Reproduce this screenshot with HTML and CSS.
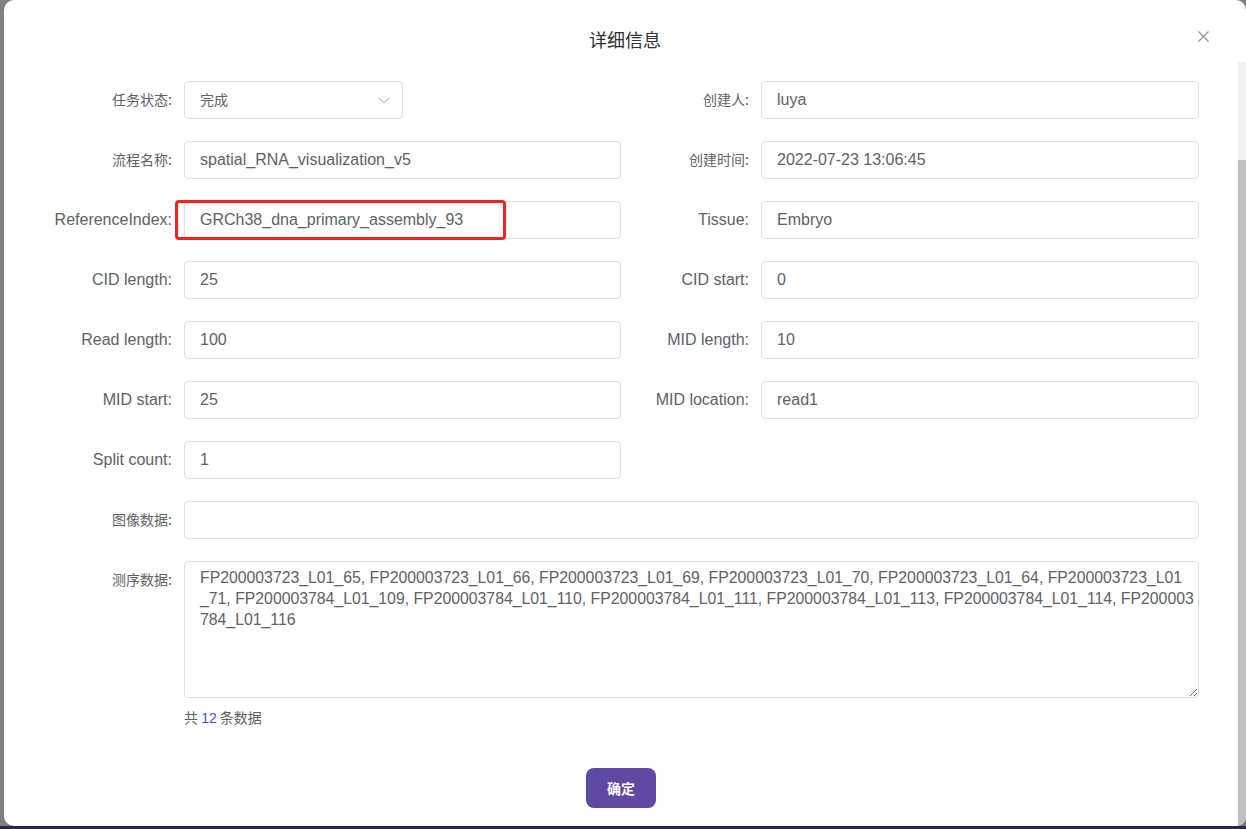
FILE: index.html
```html
<!DOCTYPE html>
<html lang="zh-CN">
<head>
<meta charset="utf-8">
<title>详细信息</title>
<link rel="stylesheet" href="styles.css">
</head>
<body>
<div class="stage">
  <div class="modal">
    <div class="modal-header">
      <span class="modal-title">详细信息</span>
      <button class="close" type="button" aria-label="关闭">
        <svg width="11" height="11" viewBox="0 0 11 11"><path d="M0.5 0.5 L10.5 10.5 M10.5 0.5 L0.5 10.5" stroke="#909399" stroke-width="1.2" fill="none"/></svg>
      </button>
    </div>
    <div class="modal-body">
      <div class="content">
        <div class="form">
          <label class="label zh">任务状态:</label>
          <div class="field">
            <div class="select">
              <span class="zh">完成</span>
              <svg width="12" height="7" viewBox="0 0 12 7"><path d="M1 1 L6 6 L11 1" stroke="#c0c4cc" stroke-width="1.1" fill="none"/></svg>
            </div>
          </div>
          <label class="label zh">创建人:</label>
          <div class="field"><div class="input">luya</div></div>

          <label class="label zh">流程名称:</label>
          <div class="field"><div class="input">spatial_RNA_visualization_v5</div></div>
          <label class="label zh">创建时间:</label>
          <div class="field"><div class="input">2022-07-23 13:06:45</div></div>

          <label class="label">ReferenceIndex:</label>
          <div class="field">
            <div class="input">GRCh38_dna_primary_assembly_93</div>
            <div class="mark"></div>
          </div>
          <label class="label">Tissue:</label>
          <div class="field"><div class="input">Embryo</div></div>

          <label class="label">CID length:</label>
          <div class="field"><div class="input">25</div></div>
          <label class="label">CID start:</label>
          <div class="field"><div class="input">0</div></div>

          <label class="label">Read length:</label>
          <div class="field"><div class="input">100</div></div>
          <label class="label">MID length:</label>
          <div class="field"><div class="input">10</div></div>

          <label class="label">MID start:</label>
          <div class="field"><div class="input">25</div></div>
          <label class="label">MID location:</label>
          <div class="field"><div class="input">read1</div></div>

          <label class="label">Split count:</label>
          <div class="field"><div class="input">1</div></div>
          <div class="empty"></div>

          <label class="label zh">图像数据:</label>
          <div class="field wide"><div class="input"></div></div>

          <label class="label label-top zh">测序数据:</label>
          <div class="field wide">
            <textarea class="textarea" readonly wrap="off">FP200003723_L01_65, FP200003723_L01_66, FP200003723_L01_69, FP200003723_L01_70, FP200003723_L01_64, FP200003723_L01
_71, FP200003784_L01_109, FP200003784_L01_110, FP200003784_L01_111, FP200003784_L01_113, FP200003784_L01_114, FP200003
784_L01_116</textarea>
            <div class="note">共 <span class="num">12</span> 条数据</div>
          </div>
        </div>
        <div class="footer">
          <button class="btn" type="button">确定</button>
        </div>
      </div>
      <div class="scrollbar"><div class="thumb"></div></div>
    </div>
  </div>
</div>
<div class="bottom-strip"></div>
</body>
</html>
```

FILE: styles.css
```css
html, body {
  margin: 0;
  padding: 0;
  width: 1246px;
  height: 829px;
  overflow: hidden;
}
body {
  background: #7f7f7f;
  font-family: "Liberation Sans", "Noto Sans CJK SC", sans-serif;
  font-size: 16px;
  color: #606266;
}
.zh {
  font-family: "Noto Sans CJK SC", sans-serif;
  font-size: 14px;
}
.stage {
  display: flex;
  height: 826px;
  padding-left: 4px;
}
.modal {
  flex: 1;
  display: flex;
  flex-direction: column;
  background: #fff;
  border-radius: 10px;
  overflow: hidden;
}
.modal-header {
  position: relative;
  height: 62px;
  box-sizing: border-box;
  padding-top: 26px;
  text-align: center;
}
.modal-title {
  font-size: 18px;
  line-height: 26px;
  color: #303133;
  font-family: "Noto Sans CJK SC", sans-serif;
}
.close {
  position: absolute;
  right: 37px;
  top: 31px;
  width: 11px;
  height: 11px;
  padding: 0;
  border: 0;
  background: none;
  display: flex;
}
.modal-body {
  flex: 1;
  display: flex;
  min-height: 0;
}
.content {
  flex: 1;
  padding: 19px 20px 0 20px;
}
.scrollbar {
  width: 8px;
  background: #f1f1f1;
  display: flex;
  flex-direction: column;
  padding-top: 98px;
}
.thumb {
  flex: 1;
  background: #c1c1c1;
}
.form {
  display: grid;
  grid-template-columns: 160px 437px 140px 438px;
  row-gap: 22px;
}
.label {
  text-align: right;
  padding-right: 12px;
  line-height: 38px;
  height: 38px;
  white-space: nowrap;
  color: #606266;
}
.label.zh {
  line-height: 36px;
}
.empty {
  grid-column: span 2;
}
.field {
  position: relative;
}
.field.wide {
  grid-column: 2 / 5;
}
.input, .select {
  box-sizing: border-box;
  height: 38px;
  border: 1px solid #dcdfe6;
  border-radius: 4px;
  padding: 0 15px;
  line-height: 36px;
  color: #606266;
  background: #fff;
  white-space: nowrap;
  overflow: hidden;
}
.select {
  width: 219px;
  display: flex;
  align-items: center;
  justify-content: space-between;
  padding-right: 12px;
}
.select .zh {
  line-height: 20px;
  margin-top: -2px;
}
.select svg {
  flex: none;
}
.mark {
  position: absolute;
  left: -9px;
  top: -1px;
  width: 331px;
  height: 40px;
  box-sizing: border-box;
  border: 3px solid #ff1f1f;
  border-radius: 4px;
}
.textarea {
  display: block;
  box-sizing: border-box;
  width: 100%;
  height: 137px;
  margin: 0;
  border: 1px solid #dcdfe6;
  border-radius: 4px;
  padding: 5px 15px;
  font-family: "Liberation Sans", "Noto Sans CJK SC", sans-serif;
  font-size: 15.8px;
  line-height: 21px;
  color: #606266;
  overflow: hidden;
  resize: vertical;
  outline: none;
}
.note {
  margin-top: 10px;
  line-height: 18px;
  font-size: 14px;
  font-family: "Noto Sans CJK SC", sans-serif;
  color: #606266;
}
.num {
  font-family: "Liberation Sans", sans-serif;
  color: #3f5bc2;
}
.footer {
  display: flex;
  justify-content: center;
  padding-top: 41px;
}
.btn {
  width: 70px;
  height: 40px;
  border: 0;
  border-radius: 8px;
  background: #5e49a3;
  color: #fff;
  font-family: "Noto Sans CJK SC", sans-serif;
  font-weight: bold;
  font-size: 14px;
}
.bottom-strip {
  height: 3px;
  background: #2b2546;
}
```
